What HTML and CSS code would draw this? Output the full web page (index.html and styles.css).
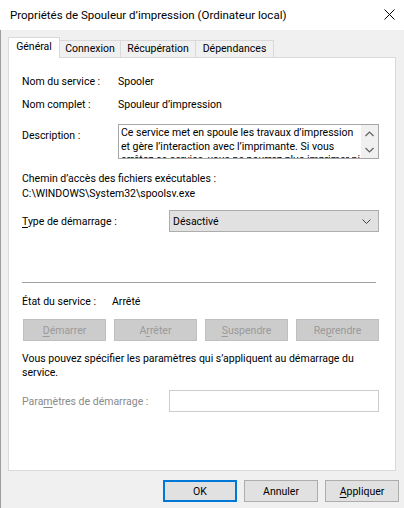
FILE: index.html
```html
<!DOCTYPE html>
<html lang="fr">
<head>
<meta charset="utf-8">
<title>Propriétés de Spouleur d'impression</title>
<link rel="stylesheet" href="styles.css">
</head>
<body>
<div class="window">
  <div class="titlebar">
    <span class="title">Propriétés de Spouleur d’impression (Ordinateur local)</span>
    <svg class="close" width="11" height="11" viewBox="0 0 11 11"><path d="M0.5 0.5 L10.5 10.5 M10.5 0.5 L0.5 10.5" stroke="#000" stroke-width="1" fill="none"/></svg>
  </div>
  <div class="client">
    <div class="tabs">
      <div class="tab selected">Général</div>
      <div class="tab w-conn">Connexion</div>
      <div class="tab w-recup">Récupération</div>
      <div class="tab w-dep">Dépendances</div>
    </div>
    <div class="panel">
      <div class="row">
        <span>Nom du service :</span>
        <span>Spooler</span>
      </div>
      <div class="row gap8">
        <span>Nom complet :</span>
        <span>Spouleur d’impression</span>
      </div>
      <div class="row desc-row">
        <span class="desc-label">Description :</span>
        <div class="desc-box">
          <div class="desc-text">
            <div>Ce service met en spoule les travaux d’impression</div>
            <div>et gère l’interaction avec l’imprimante. Si vous</div>
            <div>arrêtez ce service, vous ne pourrez plus imprimer ni</div>
          </div>
          <div class="scroll">
            <svg width="9" height="6" viewBox="0 0 9 6"><path d="M0.5 5 L4.5 1 L8.5 5" stroke="#606060" stroke-width="1.2" fill="none"/></svg>
            <svg width="9" height="6" viewBox="0 0 9 6"><path d="M0.5 1 L4.5 5 L8.5 1" stroke="#606060" stroke-width="1.2" fill="none"/></svg>
          </div>
        </div>
      </div>
      <div class="path-label">Chemin d’accès des fichiers exécutables :</div>
      <div class="path">C:\WINDOWS\System32\spoolsv.exe</div>
      <div class="row2 startup">
        <span><u>T</u>ype de démarrage :</span>
        <div class="select">
          <span>Désactivé</span>
          <svg width="9" height="5" viewBox="0 0 9 5"><path d="M0.5 0.5 L4.5 4.5 L8.5 0.5" stroke="#404040" stroke-width="1" fill="none"/></svg>
        </div>
      </div>
      <div class="sep"></div>
      <div class="state">
        <span>État du service :</span>
        <span>Arrêté</span>
      </div>
      <div class="btns">
        <div class="btn disabled"><u>D</u>émarrer</div>
        <div class="btn disabled">A<u>r</u>rêter</div>
        <div class="btn disabled"><u>S</u>uspendre</div>
        <div class="btn disabled">Re<u>p</u>rendre</div>
      </div>
      <p class="info">Vous pouvez spécifier les paramètres qui s’appliquent au démarrage du service.</p>
      <div class="row2 params">
        <span class="dim">Para<u>m</u>ètres de démarrage :</span>
        <div class="input"></div>
      </div>
    </div>
    <div class="footer">
      <div class="btn default">OK</div>
      <div class="btn">Annuler</div>
      <div class="btn"><u>A</u>ppliquer</div>
    </div>
  </div>
</div>
</body>
</html>
```
FILE: styles.css
```css
* { box-sizing: border-box; }
html, body { margin: 0; padding: 0; }
body {
  width: 404px;
  height: 508px;
  overflow: hidden;
  background: #f0f0f0;
  font-family: Roboto, "Noto Sans", sans-serif;
  font-size: 10.5px;
  color: #000;
}
u { text-decoration: underline; text-underline-offset: 1.5px; }
.window { width: 404px; height: 508px; display: flex; flex-direction: column; }
.titlebar {
  height: 30px;
  background: #fff;
  display: flex;
  align-items: center;
  justify-content: space-between;
  padding: 0 9px 0 10px;
  flex: none;
}
.title { font-size: 11.5px; color: #000; }
.close { display: block; margin-top: -1px; }
.client {
  flex: 1;
  border-left: 1px solid #9c9c9c;
  padding-left: 7px;
  display: flex;
  flex-direction: column;
}
.tabs {
  margin-top: 7px;
  height: 21px;
  margin-bottom: -1px;
  display: flex;
  align-items: flex-start;
}
.tab {
  margin-top: 3px;
  height: 17px;
  line-height: 16px;
  text-align: center;
  background: #f0f0f0;
  border-top: 1px solid #d9d9d9;
  border-right: 1px solid #d9d9d9;
}
.tab.selected {
  position: relative;
  z-index: 1;
  margin-top: 0;
  width: 52px;
  height: 21px;
  line-height: 17px;
  background: #fff;
  border-left: 1px solid #d9d9d9;
}
.w-conn { width: 61px; }
.w-recup { width: 75px; }
.w-dep { width: 78px; }
.panel {
  width: 388px;
  height: 414px;
  background: #fff;
  border: 1px solid #d9d9d9;
  padding: 16px 16px 0 13px;
  flex: none;
}
.row {
  display: grid;
  grid-template-columns: 96px 1fr;
  line-height: 15px;
}
.gap8 { margin-top: 8px; }
.desc-row { margin-top: 12px; align-items: start; }
.desc-label { padding-top: 4px; }
.desc-box {
  height: 35px;
  border: 1px solid #a6a6a6;
  display: flex;
  overflow: hidden;
}
.desc-text {
  flex: 1;
  padding: 1px 0 0 2px;
  line-height: 13.5px;
  white-space: nowrap;
  overflow: hidden;
}
.scroll {
  width: 17px;
  flex: none;
  background: #f0f0f0;
  display: flex;
  flex-direction: column;
  align-items: center;
  justify-content: space-between;
  padding: 6px 0 5px;
}
.scroll svg { display: block; }
.path-label { margin-top: 12px; line-height: 15px; }
.path { line-height: 15px; }
.row2 {
  display: grid;
  grid-template-columns: 147px 1fr;
  align-items: center;
}
.startup { margin-top: 9px; }
.select {
  height: 22px;
  background: #e1e1e1;
  border: 1px solid #adadad;
  display: flex;
  align-items: center;
  justify-content: space-between;
  padding: 0 7px 0 3px;
}
.select svg { display: block; }
.sep {
  margin-top: 50px;
  width: 354px;
  height: 1px;
  background: #a0a0a0;
}
.state {
  margin-top: 11px;
  display: grid;
  grid-template-columns: 90px 1fr;
  line-height: 15px;
}
.btns {
  margin-top: 10px;
  padding-left: 1px;
  display: grid;
  grid-template-columns: repeat(4, 1fr);
  gap: 8px;
}
.btn {
  height: 22px;
  border: 1px solid #adadad;
  background: #e1e1e1;
  display: flex;
  align-items: center;
  justify-content: center;
}
.btn.disabled {
  background: #cccccc;
  border-color: #bfbfbf;
  color: #9a9a9a;
}
.info {
  margin: 11px 0 0;
  line-height: 14px;
  width: 340px;
}
.params { margin-top: 10px; }
.dim { color: #8a8a8a; }
.input {
  height: 22px;
  border: 1px solid #cccccc;
  background: #fff;
}
.footer {
  margin-top: 9px;
  padding-right: 5px;
  display: flex;
  justify-content: flex-end;
  gap: 7px;
}
.footer .btn { width: 74px; }
.footer .btn.default { border: 2px solid #0078d7; }
```
